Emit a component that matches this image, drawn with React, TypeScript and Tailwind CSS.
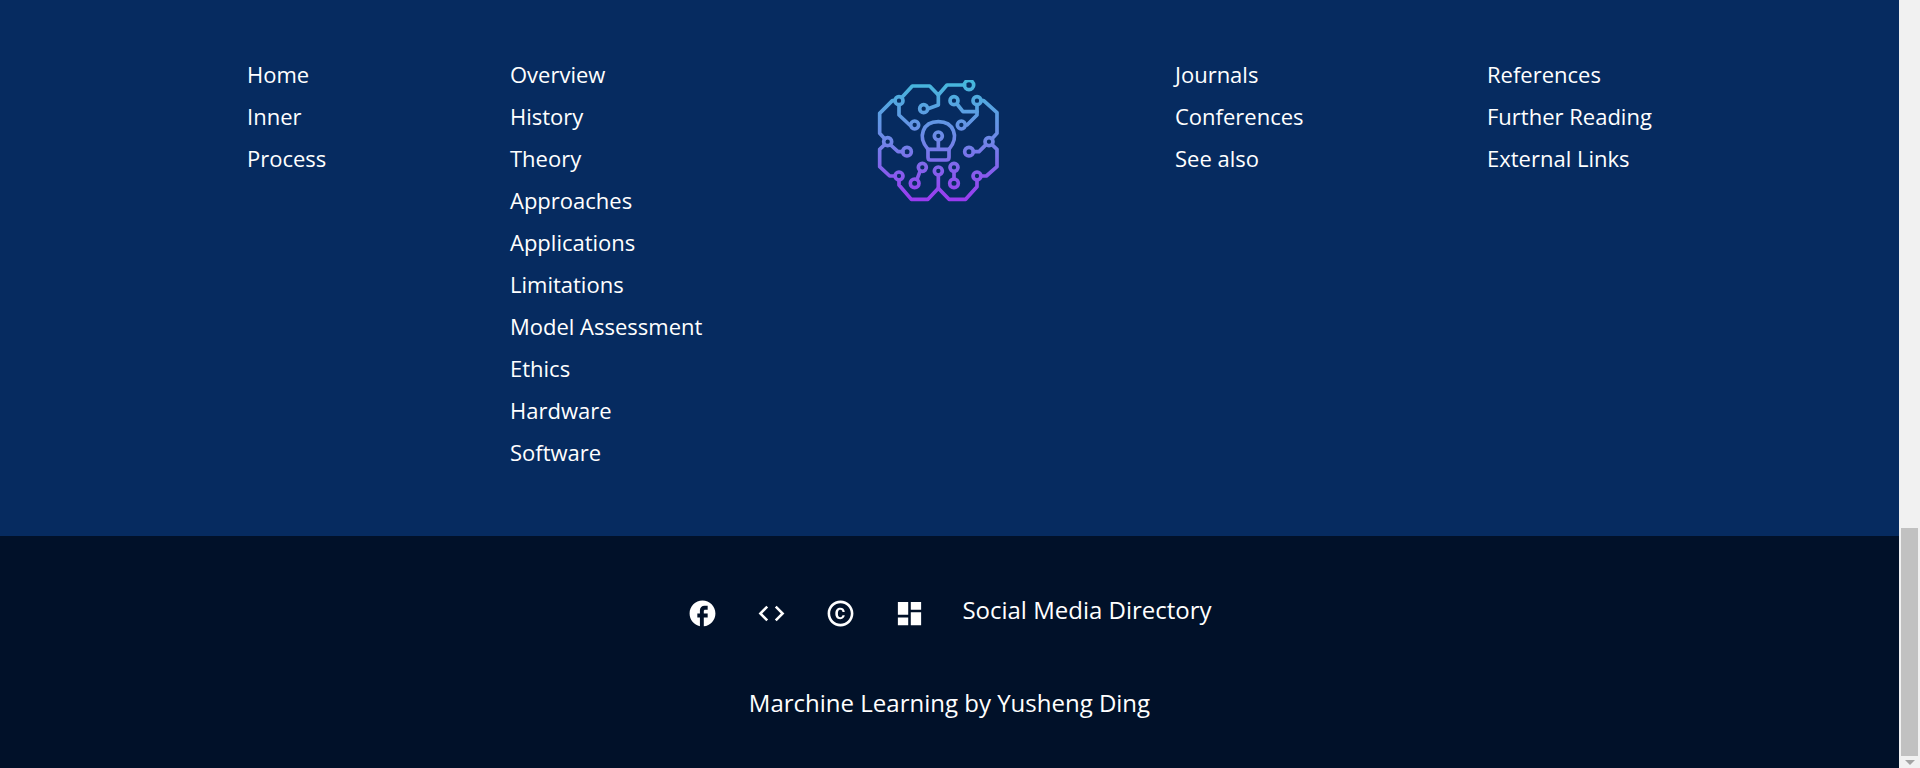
import React from 'react';
import { MdFacebook, MdCode, MdCopyright, MdDashboard } from 'react-icons/md';

const columns = {
  first: ['Home', 'Inner', 'Process'],
  second: ['Overview', 'History', 'Theory', 'Approaches', 'Applications', 'Limitations', 'Model Assessment', 'Ethics', 'Hardware', 'Software'],
  third: ['Journals', 'Conferences', 'See also'],
  fourth: ['References', 'Further Reading', 'External Links'],
};

const LinkColumn: React.FC<{ items: string[]; className: string }> = ({ items, className }) => (
  <ul className={className}>
    {items.map((item) => (
      <li key={item} className="h-[42px] leading-[42px]">
        <a href="#">{item}</a>
      </li>
    ))}
  </ul>
);

// Traced from the reference, coordinates are 3x the drawn size
const BrainLogo: React.FC = () => (
  <svg viewBox="40 30 390 375" width="130" height="125" fill="none" strokeWidth="11" strokeLinejoin="round" strokeLinecap="round">
    <defs>
      <linearGradient id="brain" gradientUnits="userSpaceOnUse" x1="0" y1="35" x2="0" y2="390">
        <stop offset="0" stopColor="#45b8dc" />
        <stop offset="0.5" stopColor="#6f86e8" />
        <stop offset="1" stopColor="#9a3bf0" />
      </linearGradient>
    </defs>
    <g stroke="url(#brain)">
      <path d="M127 82 L158 48 H210 L236 75 L262 45 H315" />
      <path d="M236 75 V105 L205 116" />
      <path d="M105 92 H98 L60 130 V190 L75 206" />
      <path d="M118 105 V135 L150 165" />
      <path d="M93 225 L115 245 H130" />
      <path d="M75 224 L60 238 V290 L90 318 H105" />
      <path d="M118 331 V345 L155 388 H205 L236 355 L268 388 H318 L352 350 V331" />
      <path d="M365 318 H380 L412 290 V238 L397 224" />
      <path d="M379 224 L358 245 H341" />
      <path d="M397 206 L412 190 V128 L372 92 H365" />
      <path d="M352 105 V135 L322 165 H318" />
      <path d="M292 102 L310 125 H352" />
      <path d="M205 238 C172 200 190 155 236 155 C282 155 300 200 268 238 V262 Q268 270 260 270 H212 Q205 270 205 262 Z" />
      <path d="M205 238 H268 M236 211 V238" />
      <path d="M236 316 V355" />
      <path d="M181 304 L172 328" />
      <path d="M283 305 V327" />
      <circle cx="328" cy="45" r="14" />
      <circle cx="192" cy="116" r="12" />
      <circle cx="118" cy="92" r="12" />
      <circle cx="283" cy="92" r="12" />
      <circle cx="352" cy="92" r="12" />
      <circle cx="165" cy="165" r="12" />
      <circle cx="305" cy="165" r="12" />
      <circle cx="236" cy="198" r="12" />
      <circle cx="84" cy="215" r="12" />
      <circle cx="388" cy="215" r="12" />
      <circle cx="142" cy="245" r="13" />
      <circle cx="328" cy="245" r="13" />
      <circle cx="188" cy="292" r="12" />
      <circle cx="283" cy="292" r="12" />
      <circle cx="236" cy="303" r="12" />
      <circle cx="118" cy="318" r="12" />
      <circle cx="352" cy="318" r="12" />
      <circle cx="165" cy="340" r="13" />
      <circle cx="283" cy="340" r="13" />
    </g>
  </svg>
);

export default function App() {
  return (
    <div className="flex h-[768px] overflow-hidden font-['Open_Sans',sans-serif] text-[22px] text-white">
      <div className="flex min-w-0 flex-1 flex-col">
        <div className="flex h-[536px] bg-[#062b60] pl-[247px] pt-[53px]">
          <LinkColumn items={columns.first} className="w-[263px]" />
          <LinkColumn items={columns.second} className="w-[363px]" />
          <div className="w-[302px] pt-[27px]">
            <BrainLogo />
          </div>
          <LinkColumn items={columns.third} className="w-[312px]" />
          <LinkColumn items={columns.fourth} className="w-[300px]" />
        </div>
        <div className="flex flex-1 flex-col items-center bg-[#011129] pt-[56px]">
          <div className="flex h-[42px] items-center gap-[38px]">
            <MdFacebook size={31} />
            <MdCode size={31} />
            <MdCopyright size={31} />
            <MdDashboard size={31} />
            <span className="-ml-[1px] -mt-[6px] text-[24px] leading-[42px]">Social Media Directory</span>
          </div>
          <p className="mt-[48px] text-[24px] leading-[42px]">Marchine Learning by Yusheng Ding</p>
        </div>
      </div>
      <div className="flex w-[21px] flex-col bg-[#f1f1f1]">
        <div className="mx-[2px] mt-[528px] h-[228px] bg-[#c1c1c1]" />
        <div className="flex flex-1 items-center justify-center">
          <div className="h-0 w-0 border-x-[5px] border-t-[5px] border-x-transparent border-t-[#a3a3a3]" />
        </div>
      </div>
    </div>
  );
}
